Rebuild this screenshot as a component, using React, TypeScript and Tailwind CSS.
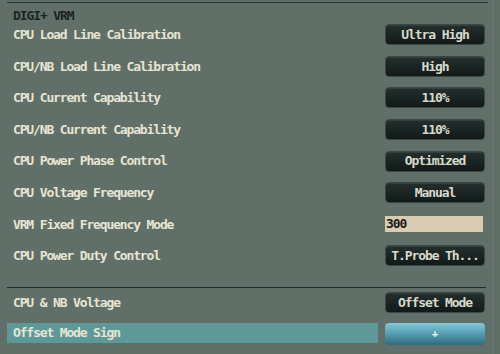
const rows: { label: string; value: string; kind?: "field" }[] = [
  { label: "CPU Load Line Calibration", value: "Ultra High" },
  { label: "CPU/NB Load Line Calibration", value: "High" },
  { label: "CPU Current Capability", value: "110%" },
  { label: "CPU/NB Current Capability", value: "110%" },
  { label: "CPU Power Phase Control", value: "Optimized" },
  { label: "CPU Voltage Frequency", value: "Manual" },
  { label: "VRM Fixed Frequency Mode", value: "300", kind: "field" },
  { label: "CPU Power Duty Control", value: "T.Probe Th..." },
];

function DarkButton({ children }: { children: React.ReactNode }) {
  return (
    <div className="w-[100px] h-[21px] rounded-[4px] bg-gradient-to-b from-[#24302e] to-[#111a19] border border-[#3a4845] shadow-[inset_0_1px_0_rgba(255,255,255,0.08)] flex items-center justify-center text-[#d6dacb] text-[13px] tracking-[-1.1px]">
      {children}
    </div>
  );
}

export default function App() {
  return (
    <div
      className="w-[500px] h-[354px] bg-[#607069] overflow-hidden relative font-bold"
      style={{ fontFamily: '"DejaVu Sans Mono", "Liberation Mono", monospace' }}
    >
      <div className="absolute top-0 bottom-0 left-[492px] w-px bg-[#6a7a73]" />
      <div className="ml-[7px] w-[481px] h-px mt-[2px] bg-[#2b3734]" />
      <div className="pl-[13px] pt-[6px] h-[16px] leading-[14px] text-[13px] tracking-[-1.1px] text-[#1a2422]">
        DIGI+ VRM
      </div>
      <div className="flex flex-col">
        {rows.map((r) => (
          <div key={r.label} className="h-[31.6px] flex items-center pl-[13px] pr-[15px]">
            <span className="flex-1 text-[13px] tracking-[-1.15px] text-[#e6e5d2]">{r.label}</span>
            {r.kind === "field" ? (
              <div className="w-[98px] h-[16px] mr-[2px] bg-[#d9ccb2] text-[#1c1c18] text-[13px] tracking-[-1.1px] leading-[16px] pl-px">
                {r.value}
              </div>
            ) : (
              <DarkButton>{r.value}</DarkButton>
            )}
          </div>
        ))}
      </div>
      <div className="ml-[7px] w-[479px] h-px mt-[15px] bg-[#222c2a]" />
      <div className="h-[30px] flex items-center pl-[13px] pr-[15px]">
        <span className="flex-1 text-[13px] tracking-[-1.15px] text-[#e6e5d2]">CPU &amp; NB Voltage</span>
        <DarkButton>Offset Mode</DarkButton>
      </div>
      <div className="mt-[5px] flex items-start pl-[7px] pr-[15px]">
        <div className="w-[371px] h-[20px] bg-[#5e999a] pl-[6px] flex items-center text-[13px] tracking-[-1.15px] text-[#e6e5d2]">
          Offset Mode Sign
        </div>
        <div className="ml-[7px] w-[100px] h-[22px] rounded-[4px] bg-gradient-to-b from-[#80c8da] via-[#559cb0] to-[#2e6c7e] flex items-center justify-center text-white text-[10px]">
          +
        </div>
      </div>
    </div>
  );
}
